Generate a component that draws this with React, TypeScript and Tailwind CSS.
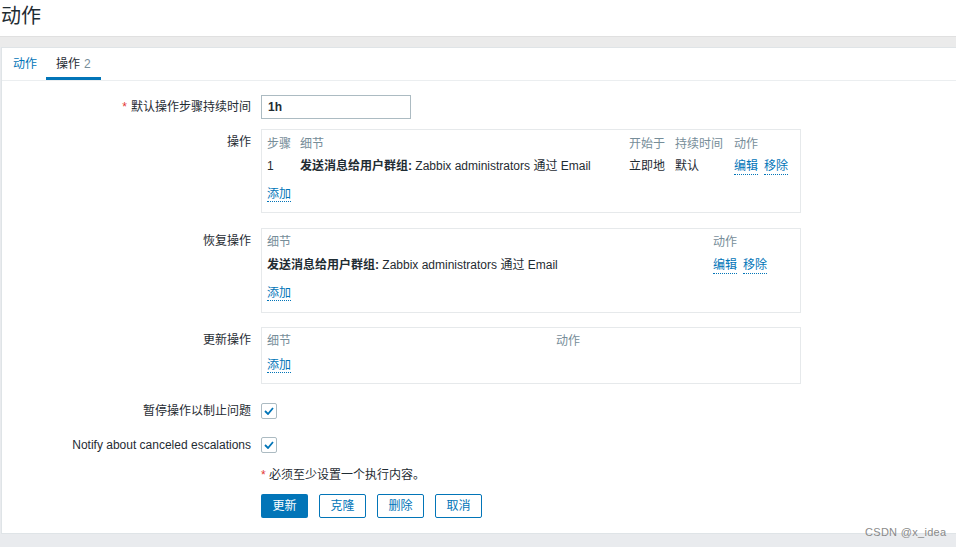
import React from "react";

const font = { fontFamily: '"Liberation Sans", Arial, "Noto Sans CJK SC", sans-serif' };

function Link({ children }: { children: React.ReactNode }) {
  return (
    <span className="text-[#0275b8] border-b border-dotted border-[#0275b8] leading-[14px] inline-block">
      {children}
    </span>
  );
}

function Check() {
  return (
    <div className="w-[16px] h-[16px] border border-[#acbbc2] rounded-[2px] bg-white flex items-center justify-center">
      <svg width="10" height="8" viewBox="0 0 10 8">
        <path d="M1 4 L4 7 L9 1" fill="none" stroke="#0275b8" strokeWidth="1.8" />
      </svg>
    </div>
  );
}

function Label({ children, top }: { children: React.ReactNode; top?: boolean }) {
  return (
    <div className={`w-[249px] shrink-0 text-right text-[#1f2c33] ${top ? "pt-[4px]" : ""}`}>{children}</div>
  );
}

export default function App() {
  return (
    <div style={font} className="relative w-[956px] h-[547px] bg-[#e9ebee] text-[12px] text-[#1f2c33] overflow-hidden">
      <div className="h-[37px] bg-white border-b border-[#e0e0e0] flex items-center">
        <h1 className="text-[20px] leading-[24px] pl-[1px] pb-[4px] text-[#1f2c33]">动作</h1>
      </div>
      <div className="h-[10px] bg-[#ebebeb]" />
      <div className="ml-[1px] bg-white border border-r-0 border-[#dfe4e7] h-[487px]">
        <div className="flex h-[33px] border-b border-[#ebeef0] pl-[10px]">
          <div className="px-[1px] flex items-center text-[#0275b8]">动作</div>
          <div className="ml-[8px] px-[10px] flex items-center border-b-[3px] border-[#0275b8] pt-[3px]">
            操作 <span className="ml-[4px] text-[#768d99]">2</span>
          </div>
        </div>

        <div className="pt-[14px]">
          <div className="flex items-center">
            <Label>
              <span className="text-[#e33734] mr-[4px]">*</span>默认操作步骤持续时间
            </Label>
            <div className="ml-[10px] w-[150px] h-[24px] border border-[#acbbc2] flex items-center px-[6px] font-bold">
              1h
            </div>
          </div>

          <div className="flex mt-[10px]">
            <Label top>操作</Label>
            <div className="ml-[10px] w-[540px] h-[84px] border border-[#e6e9eb] px-[5px] pt-[5px]">
              <div className="grid grid-cols-[33px_329px_46px_59px_1fr] leading-[18px]">
                <div className="text-[#768d99]">步骤</div>
                <div className="text-[#768d99]">细节</div>
                <div className="text-[#768d99]">开始于</div>
                <div className="text-[#768d99]">持续时间</div>
                <div className="text-[#768d99]">动作</div>
              </div>
              <div className="grid grid-cols-[33px_329px_46px_59px_1fr] mt-[4px] leading-[18px]">
                <div>1</div>
                <div>
                  <b>发送消息给用户群组:</b> Zabbix administrators 通过 Email
                </div>
                <div>立即地</div>
                <div>默认</div>
                <div className="flex gap-[6px] pt-[2px]">
                  <Link>编辑</Link>
                  <Link>移除</Link>
                </div>
              </div>
              <div className="mt-[10px]">
                <Link>添加</Link>
              </div>
            </div>
          </div>

          <div className="flex mt-[15px]">
            <Label top>恢复操作</Label>
            <div className="ml-[10px] w-[540px] h-[85px] border border-[#e6e9eb] px-[5px] pt-[4px]">
              <div className="grid grid-cols-[446px_1fr] leading-[18px]">
                <div className="text-[#768d99]">细节</div>
                <div className="text-[#768d99]">动作</div>
              </div>
              <div className="grid grid-cols-[446px_1fr] mt-[5px] leading-[18px]">
                <div>
                  <b>发送消息给用户群组:</b> Zabbix administrators 通过 Email
                </div>
                <div className="flex gap-[6px] pt-[2px]">
                  <Link>编辑</Link>
                  <Link>移除</Link>
                </div>
              </div>
              <div className="mt-[10px]">
                <Link>添加</Link>
              </div>
            </div>
          </div>

          <div className="flex mt-[14px]">
            <Label top>更新操作</Label>
            <div className="ml-[10px] w-[540px] h-[57px] border border-[#e6e9eb] px-[5px] pt-[4px]">
              <div className="grid grid-cols-[289px_1fr] leading-[18px]">
                <div className="text-[#768d99]">细节</div>
                <div className="text-[#768d99]">动作</div>
              </div>
              <div className="mt-[6px]">
                <Link>添加</Link>
              </div>
            </div>
          </div>

          <div className="flex items-center mt-[18px] h-[18px]">
            <Label>暂停操作以制止问题</Label>
            <div className="ml-[10px]">
              <Check />
            </div>
          </div>

          <div className="flex items-center mt-[16px] h-[18px]">
            <Label>Notify about canceled escalations</Label>
            <div className="ml-[10px]">
              <Check />
            </div>
          </div>

          <div className="flex mt-[13px] leading-[16px]">
            <div className="w-[249px]" />
            <div className="ml-[10px]">
              <span className="text-[#e33734]">*</span> 必须至少设置一个执行内容。
            </div>
          </div>

          <div className="flex mt-[11px]">
            <div className="w-[249px]" />
            <div className="ml-[10px] flex gap-[11px]">
              <button className="w-[47px] h-[24px] rounded-[2px] bg-[#0275b8] text-white text-[12px]">更新</button>
              <button className="w-[47px] h-[24px] rounded-[2px] border border-[#0275b8] bg-white text-[#0275b8] text-[12px]">克隆</button>
              <button className="w-[47px] h-[24px] rounded-[2px] border border-[#0275b8] bg-white text-[#0275b8] text-[12px]">删除</button>
              <button className="w-[47px] h-[24px] rounded-[2px] border border-[#0275b8] bg-white text-[#0275b8] text-[12px]">取消</button>
            </div>
          </div>
        </div>
      </div>
      <div className="absolute left-[865px] top-[524px] text-[11px] text-[#8a8a8a] tracking-[0.3px]">CSDN @x_idea</div>
    </div>
  );
}
